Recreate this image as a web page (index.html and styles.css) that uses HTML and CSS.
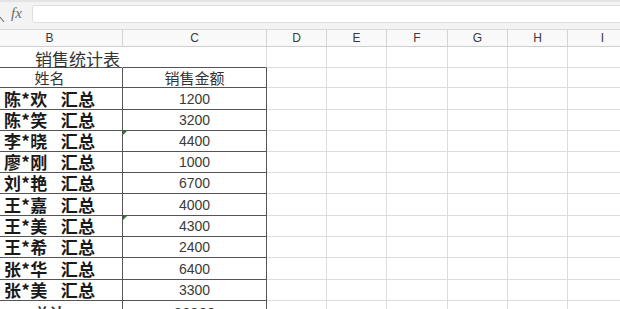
FILE: index.html
```html
<!DOCTYPE html>
<html lang="zh">
<head>
<meta charset="utf-8">
<link rel="stylesheet" href="styles.css">
</head>
<body>
<div class="app">
  <div class="formula-bar">
    <svg class="search-icon" width="6" height="10" viewBox="0 0 6 10"><path d="M0 3 L4 8" stroke="#777" stroke-width="1.2" fill="none"/></svg>
    <span class="fx">fx</span>
    <div class="formula-input"></div>
  </div>
  <div class="sheet">
    <div class="row col-head">
      <div class="cell cb">B</div><div class="cell cc">C</div><div class="cell cd">D</div><div class="cell ce">E</div><div class="cell cf">F</div><div class="cell cg">G</div><div class="cell ch">H</div><div class="cell ci">I</div>
    </div>
    <div class="row r-title">
      <div class="cell cb title no-right">销售统计表</div><div class="cell cc dark-b"></div><div class="cell cd"></div><div class="cell ce"></div><div class="cell cf"></div><div class="cell cg"></div><div class="cell ch"></div><div class="cell ci"></div>
    </div>
    <div class="row r-20">
      <div class="cell cb tb head">姓名</div><div class="cell cc tb head">销售金额</div><div class="cell cd"></div><div class="cell ce"></div><div class="cell cf"></div><div class="cell cg"></div><div class="cell ch"></div><div class="cell ci"></div>
    </div>
    <div class="row r-22"><div class="cell cb tb name">陈*欢 汇总</div><div class="cell cc tb num">1200</div><div class="cell cd"></div><div class="cell ce"></div><div class="cell cf"></div><div class="cell cg"></div><div class="cell ch"></div><div class="cell ci"></div></div>
    <div class="row r-21"><div class="cell cb tb name">陈*笑 汇总</div><div class="cell cc tb num">3200</div><div class="cell cd"></div><div class="cell ce"></div><div class="cell cf"></div><div class="cell cg"></div><div class="cell ch"></div><div class="cell ci"></div></div>
    <div class="row r-21"><div class="cell cb tb name">李*晓 汇总</div><div class="cell cc tb num flag">4400</div><div class="cell cd"></div><div class="cell ce"></div><div class="cell cf"></div><div class="cell cg"></div><div class="cell ch"></div><div class="cell ci"></div></div>
    <div class="row r-21"><div class="cell cb tb name">廖*刚 汇总</div><div class="cell cc tb num">1000</div><div class="cell cd"></div><div class="cell ce"></div><div class="cell cf"></div><div class="cell cg"></div><div class="cell ch"></div><div class="cell ci"></div></div>
    <div class="row r-21"><div class="cell cb tb name">刘*艳 汇总</div><div class="cell cc tb num">6700</div><div class="cell cd"></div><div class="cell ce"></div><div class="cell cf"></div><div class="cell cg"></div><div class="cell ch"></div><div class="cell ci"></div></div>
    <div class="row r-22"><div class="cell cb tb name">王*嘉 汇总</div><div class="cell cc tb num">4000</div><div class="cell cd"></div><div class="cell ce"></div><div class="cell cf"></div><div class="cell cg"></div><div class="cell ch"></div><div class="cell ci"></div></div>
    <div class="row r-21"><div class="cell cb tb name">王*美 汇总</div><div class="cell cc tb num flag">4300</div><div class="cell cd"></div><div class="cell ce"></div><div class="cell cf"></div><div class="cell cg"></div><div class="cell ch"></div><div class="cell ci"></div></div>
    <div class="row r-21"><div class="cell cb tb name">王*希 汇总</div><div class="cell cc tb num">2400</div><div class="cell cd"></div><div class="cell ce"></div><div class="cell cf"></div><div class="cell cg"></div><div class="cell ch"></div><div class="cell ci"></div></div>
    <div class="row r-22"><div class="cell cb tb name">张*华 汇总</div><div class="cell cc tb num">6400</div><div class="cell cd"></div><div class="cell ce"></div><div class="cell cf"></div><div class="cell cg"></div><div class="cell ch"></div><div class="cell ci"></div></div>
    <div class="row r-21"><div class="cell cb tb name">张*美 汇总</div><div class="cell cc tb num">3300</div><div class="cell cd"></div><div class="cell ce"></div><div class="cell cf"></div><div class="cell cg"></div><div class="cell ch"></div><div class="cell ci"></div></div>
    <div class="row r-21"><div class="cell cb tb head total">总计</div><div class="cell cc tb num total">36900</div><div class="cell cd"></div><div class="cell ce"></div><div class="cell cf"></div><div class="cell cg"></div><div class="cell ch"></div><div class="cell ci"></div></div>
  </div>
</div>
</body>
</html>
```

FILE: styles.css
```css
* { box-sizing: border-box; }
html, body { margin: 0; padding: 0; background: #fff; }
.app { width: 620px; height: 309px; overflow: hidden; font-family: "Noto Sans CJK SC", "Liberation Sans", sans-serif; }

.formula-bar {
  height: 30px;
  background: #f3f3f3;
  border-top: 2px solid #e4e4e4;
  border-bottom: 1px solid #d9d9d9;
  display: flex;
  align-items: flex-start;
  padding-top: 3px;
}
.search-icon { margin-top: 9px; flex: none; }
.fx {
  font-family: "Liberation Serif", serif;
  font-style: italic;
  font-size: 15px;
  color: #6b6b6b;
  width: 26px;
  padding-left: 5px;
  line-height: 17px;
  flex: none;
}
.formula-input {
  flex: 1;
  height: 18px;
  background: #fff;
  border: 1px solid #dedede;
  border-radius: 3px;
  margin-right: -10px;
}

.sheet { margin-left: -23px; width: 660px; }
.row { display: flex; }
.cell {
  flex: none;
  border-right: 1px solid #dcdcdc;
  border-bottom: 1px solid #dcdcdc;
  display: flex;
  align-items: center;
  position: relative;
  line-height: 16px;
}
.cb { width: 146px; }
.cc { width: 144px; }
.cd, .ce, .cg, .ch { width: 60px; }
.cf { width: 61px; }
.ci { width: 70px; }

.col-head .cell {
  height: 17px;
  background: #f9f9f9;
  border-right-color: #d4d4d4;
  border-bottom-color: #cfcfcf;
  justify-content: center;
  font-family: "Liberation Sans", sans-serif;
  font-size: 12px;
  color: #3a3a3a;
}
.r-title .cell { height: 21px; }
.r-20 .cell { height: 20px; }
.r-21 .cell { height: 21px; }
.r-22 .cell { height: 22px; }

.no-right { border-right-color: transparent; }
.dark-b { border-bottom-color: #555; }
.r-title .cb { border-bottom-color: #555; }
.tb { border-right-color: #555; border-bottom-color: #555; }

.title {
  padding-left: 58px;
  padding-top: 3px;
  font-size: 17px;
  color: #333;
}
.head {
  justify-content: center;
  font-size: 15px;
  color: #333;
}
.name {
  padding-left: 27px;
  font-size: 17px;
  font-weight: 700;
  color: #1a1a1a;
  white-space: pre;
  letter-spacing: 0.3px;
  word-spacing: 9px;
}
.num {
  justify-content: center;
  font-family: "Liberation Sans", sans-serif;
  font-size: 14px;
  color: #3a3a3a;
}
.total { font-weight: 700; align-items: flex-end; }
.num.total { font-weight: 400; font-size: 15px; }

.flag::before {
  content: "";
  position: absolute;
  left: 0;
  top: 0;
  border-top: 4px solid #1f7a28;
  border-right: 4px solid transparent;
}
```
